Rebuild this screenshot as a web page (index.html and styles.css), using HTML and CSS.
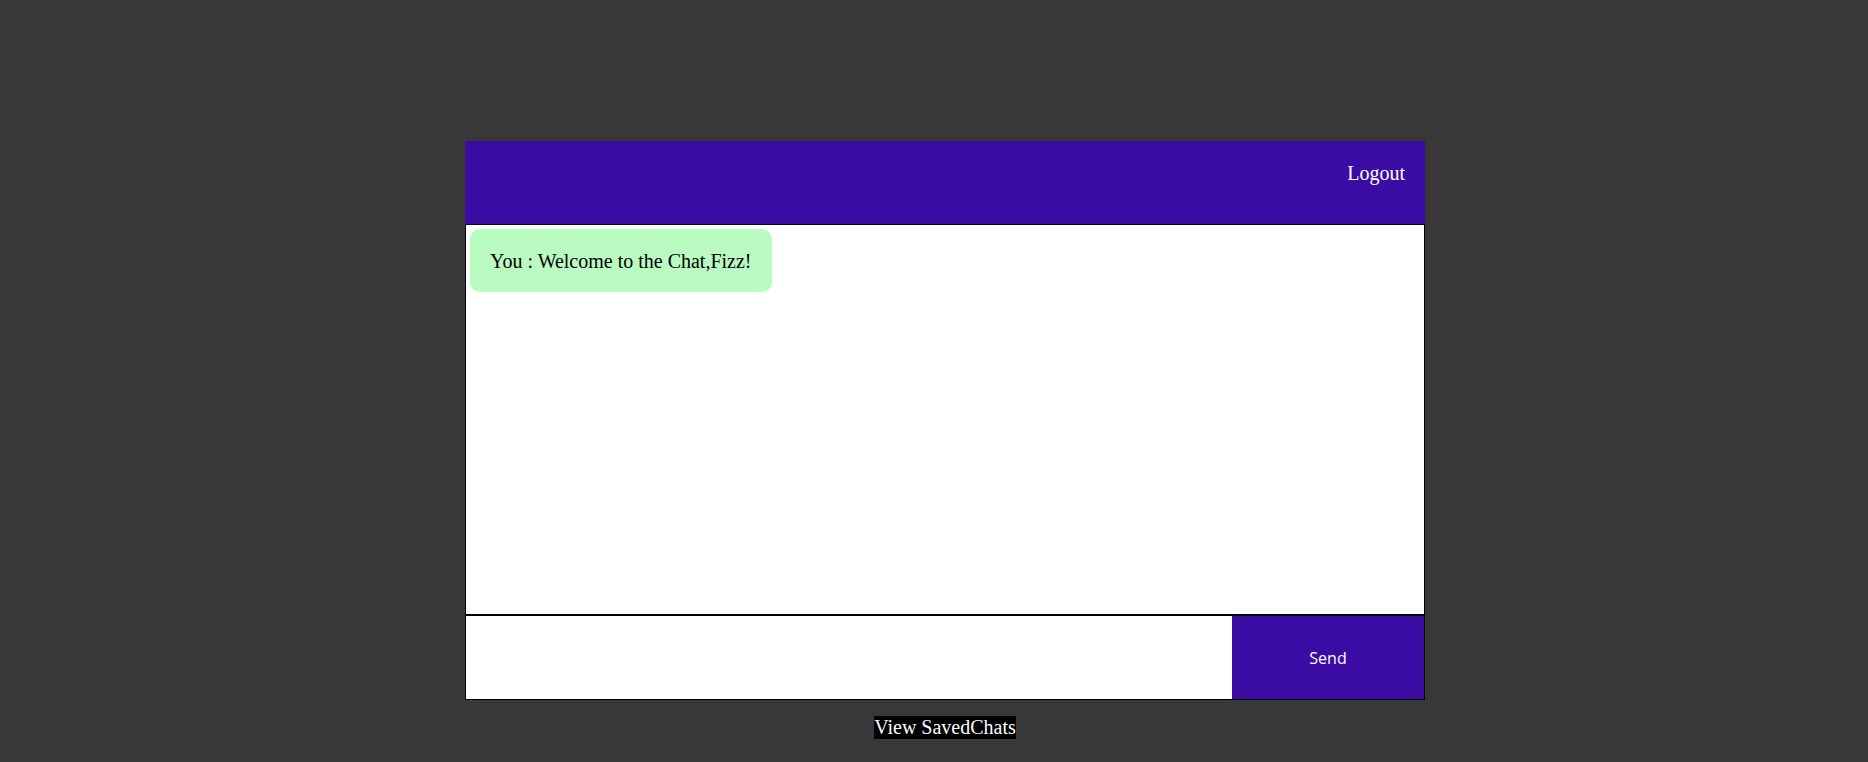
FILE: index.html
```html
<!DOCTYPE html>
<html>
<head>
<meta charset="utf-8">
<title>Chat</title>
<link rel="stylesheet" href="styles.css">
</head>
<body>
<div class="page">
  <div class="app">
    <header class="app-header">
      <button class="logout" type="button">Logout</button>
    </header>
    <div class="chat-area">
      <div class="bubble">You : Welcome to the Chat,Fizz!</div>
    </div>
    <form class="composer">
      <input class="composer-input" type="text">
      <button class="send" type="button">Send</button>
    </form>
    <div class="footer">
      <button class="saved" type="button">View SavedChats</button>
    </div>
  </div>
</div>
</body>
</html>
```

FILE: styles.css
```css
html, body {
  margin: 0;
  padding: 0;
  background: #393738;
  font-family: "Liberation Serif", "Times New Roman", serif;
}

.page {
  padding-top: 141px;
  height: 762px;
  box-sizing: border-box;
}

.app {
  width: 960px;
  margin-left: 465px;
  display: flex;
  flex-direction: column;
}

.app-header {
  height: 83px;
  background: #3a0ca3;
  display: flex;
  justify-content: flex-end;
  align-items: flex-start;
  padding: 21px 20px 0 0;
  box-sizing: border-box;
}

.logout {
  background: none;
  border: none;
  padding: 0;
  margin: 0;
  color: #ffffff;
  font-family: "Liberation Serif", "Times New Roman", serif;
  font-size: 20px;
  line-height: 23px;
}

.chat-area {
  height: 391px;
  box-sizing: border-box;
  border: 1px solid #000;
  background: #ffffff;
  display: flex;
  flex-direction: column;
  align-items: flex-start;
}

.bubble {
  margin: 4px 4px;
  padding: 21px 20px 19px;
  background: #b9fbc0;
  border-radius: 10px;
  font-size: 20px;
  line-height: 23px;
  color: #000;
}

.composer {
  margin: 0;
  height: 85px;
  box-sizing: border-box;
  border: 1px solid #000;
  display: flex;
  background: #fff;
}

.composer-input {
  flex: 1;
  border: none;
  margin: 0;
  padding: 0 10px;
  outline: none;
  background: #fff;
}

.send {
  width: 192px;
  border: none;
  margin: 0;
  background: #3a0ca3;
  color: #fff;
  font-family: "Open Sans", "DejaVu Sans", sans-serif;
  font-size: 16px;
}

.footer {
  display: flex;
  justify-content: center;
  margin-top: 16px;
}

.saved {
  background: #000;
  color: #fff;
  border: none;
  padding: 0;
  margin: 0;
  font-family: "Liberation Serif", "Times New Roman", serif;
  font-size: 20px;
  line-height: 23px;
}
```
